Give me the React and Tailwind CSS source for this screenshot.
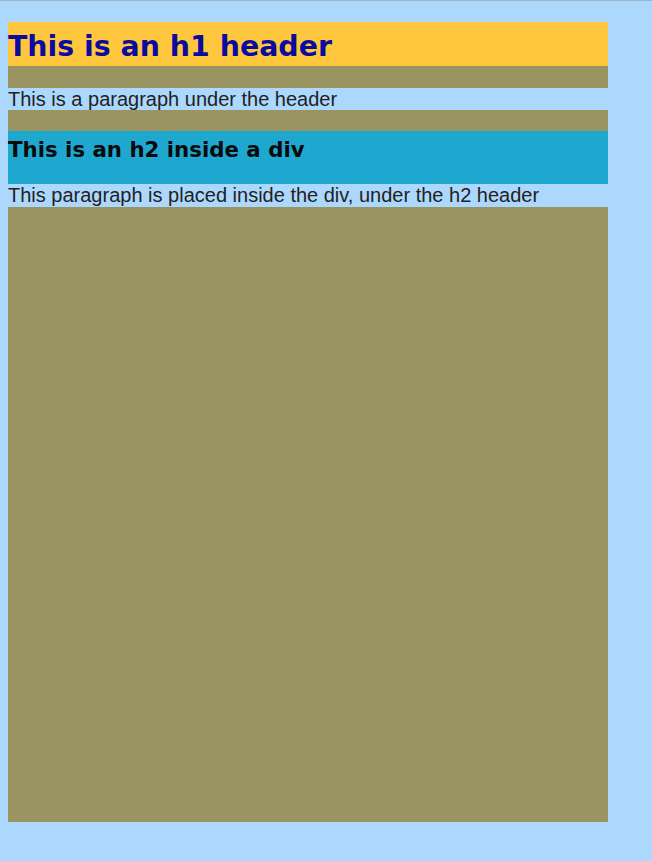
export default function App() {
  return (
    <div className="min-h-[861px] w-full bg-[#ADD8FE] border-t border-[#9DB3C9] pt-[21px] pl-2">
      <div className="w-[600px] h-[800px] bg-[#999462] flex flex-col">
        <h1 className="h-[44px] bg-[#FFC73D] text-[#0B0BA0] flex items-center pt-[6px] text-[28.4px] font-bold leading-none font-['Comic_Sans_MS','DejaVu_Sans',sans-serif]">
          This is an h1 header
        </h1>
        <p className="mt-[22px] h-[22px] bg-[#ADD8FE] text-[#222] text-[20px] leading-[22px] font-['Liberation_Sans',Arial,sans-serif]">
          This is a paragraph under the header
        </p>
        <div className="mt-[21px] flex flex-col">
          <h2 className="h-[53px] bg-[#1FA8CF] text-[#0a0a0a] flex items-center text-[21.3px] font-bold leading-none pb-[16px] font-['Comic_Sans_MS','DejaVu_Sans',sans-serif]">
            This is an h2 inside a div
          </h2>
          <p className="h-[23px] bg-[#ADD8FE] text-[#222] text-[20px] leading-[23px] font-['Liberation_Sans',Arial,sans-serif]">
            This paragraph is placed inside the div, under the h2 header
          </p>
        </div>
      </div>
    </div>
  );
}
